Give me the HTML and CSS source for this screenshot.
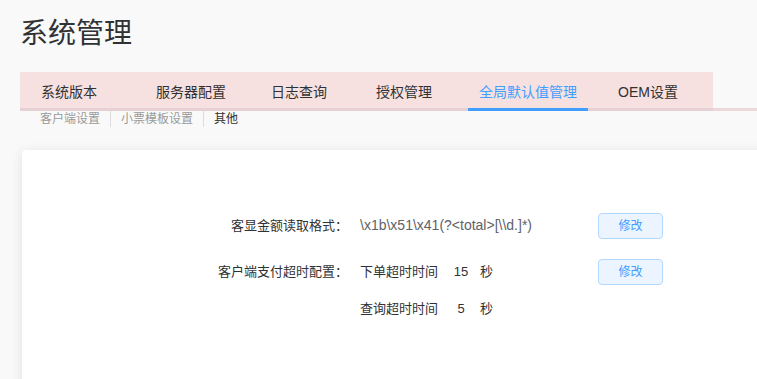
FILE: index.html
```html
<!DOCTYPE html>
<html lang="zh-CN">
<head>
    <meta charset="UTF-8">
    <meta name="viewport" content="width=device-width, initial-scale=1.0">
    <title>系统管理</title>
    <link rel="stylesheet" href="styles.css">
</head>
<body>

    <div class="page">
        <h1 class="page-title">系统管理</h1>

        <div class="tabs-head">
            <div class="tabs-nav">
                <div class="tab">系统版本</div>
                <div class="tab">服务器配置</div>
                <div class="tab">日志查询</div>
                <div class="tab">授权管理</div>
                <div class="tab active">全局默认值管理</div>
                <div class="tab">OEM设置</div>
            </div>
        </div>

        <div class="sub-nav">
            <span class="sub-item">客户端设置</span>
            <span class="sub-item">小票模板设置</span>
            <span class="sub-item current">其他</span>
        </div>

        <div class="card">
            <div class="form">
                <div class="form-item">
                    <label class="form-label">客显金额读取格式：</label>
                    <div class="form-content">
                        <span class="value-text">\x1b\x51\x41(?&lt;total&gt;[\\d.]*)</span>
                    </div>
                    <div class="form-action">
                        <button class="edit-btn">修改</button>
                    </div>
                </div>

                <div class="form-item">
                    <label class="form-label">客户端支付超时配置：</label>
                    <div class="form-content">
                        <div class="line">下单超时时间<span class="num">15</span>秒</div>
                        <div class="line">查询超时时间<span class="num">5</span>秒</div>
                    </div>
                    <div class="form-action">
                        <button class="edit-btn">修改</button>
                    </div>
                </div>
            </div>
        </div>
    </div>

</body>
</html>
```

FILE: styles.css
```css
* {
    margin: 0;
    padding: 0;
    box-sizing: border-box;
}

body {
    font-family: "Liberation Sans", Arial, "Noto Sans CJK SC", sans-serif;
    background-color: #f9f9f9;
    color: #303133;
    overflow: hidden;
}

.page {
    padding: 14px 0 0 20px;
    height: 379px;
    overflow: hidden;
}

.page-title {
    font-size: 28px;
    font-weight: normal;
    line-height: 40px;
    color: #303133;
    margin-bottom: 18px;
}

/* top tabs */
.tabs-head {
    display: flex;
    border-bottom: 3px solid #ecd8da;
}

.tabs-nav {
    display: flex;
    width: 693px;
    margin-bottom: -3px;
    background: linear-gradient(to top, #e6d2d4 3px, #f7e1e0 3px);
}

.tab {
    height: 39px;
    padding: 4px 11px 0;
    line-height: 32px;
    font-size: 14px;
    color: #303133;
    border-bottom: 3px solid transparent;
    white-space: nowrap;
    cursor: pointer;
}

.tab:nth-child(1) { margin-left: 10px; }
.tab:nth-child(2) { margin-left: 37px; }
.tab:nth-child(3) { margin-left: 23px; }
.tab:nth-child(4) { margin-left: 27px; }
.tab:nth-child(5) { margin-left: 25px; }
.tab:nth-child(6) { margin-left: 19px; }

.tab.active {
    color: #409eff;
    border-bottom-color: #409eff;
}

/* sub links */
.sub-nav {
    display: flex;
    margin-left: 10px;
    font-size: 12px;
    line-height: 16px;
}

.sub-item {
    padding: 0 10px;
    color: #999;
    cursor: pointer;
}

.sub-item + .sub-item {
    border-left: 1px solid #dcdcdc;
}

.sub-item.current {
    color: #303133;
}

/* card */
.card {
    margin: 23px 0 0 2px;
    width: 780px;
    min-height: 300px;
    background-color: #fff;
    border-radius: 4px;
    box-shadow: 0 2px 12px 0 rgba(0, 0, 0, 0.1);
    padding: 57px 0 0 176px;
}

.form {
    display: flex;
    flex-direction: column;
    gap: 9px;
}

.form-item {
    display: flex;
    align-items: flex-start;
}

.form-label {
    width: 162px;
    padding-right: 12px;
    text-align: right;
    font-size: 13px;
    line-height: 37px;
    color: #303133;
}

.form-content {
    width: 238px;
    font-size: 13px;
    line-height: 37px;
}

.value-text {
    font-size: 14px;
    color: #606266;
}

.num {
    display: inline-block;
    width: 30px;
    margin: 0 4px 0 8px;
    text-align: center;
    font-size: 13px;
}

.form-action {
    height: 37px;
    display: flex;
    align-items: center;
}

.edit-btn {
    font-family: inherit;
    font-size: 12px;
    line-height: 12px;
    padding: 6px 19.5px;
    color: #409eff;
    background-color: #ecf5ff;
    border: 1px solid #b3d8ff;
    border-radius: 4px;
    cursor: pointer;
}

.edit-btn:hover {
    background-color: #409eff;
    color: #fff;
}
```
